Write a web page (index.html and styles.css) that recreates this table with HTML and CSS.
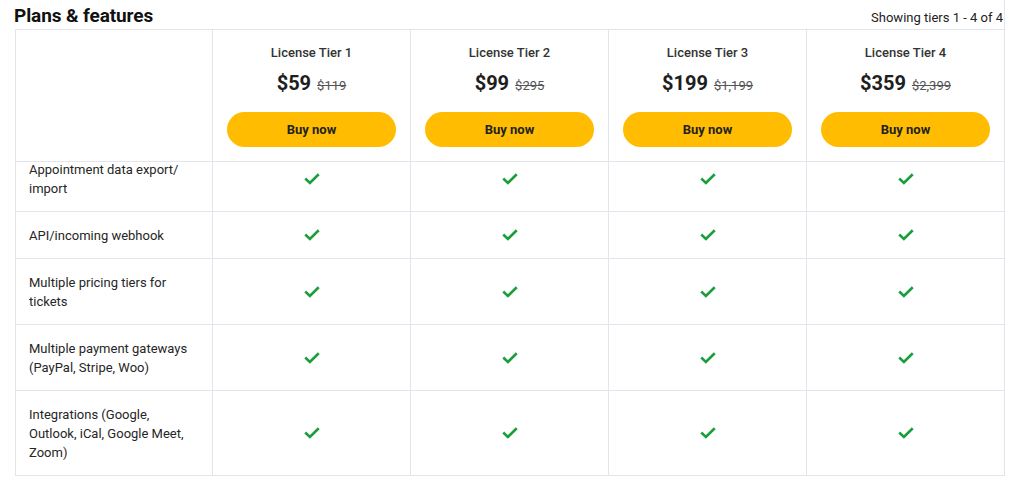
FILE: index.html
```html
<!DOCTYPE html>
<html lang="en">
<head>
<meta charset="utf-8">
<title>Plans &amp; features</title>
<link rel="stylesheet" href="styles.css">
</head>
<body>
<div class="wrap">
  <div class="topbar">
    <h2 class="title">Plans &amp; features</h2>
    <div class="showing">Showing tiers 1 - 4 of 4</div>
  </div>
  <div class="table">
    <div class="head">
      <div class="hcell empty"></div>
      <div class="hcell">
        <div class="tier">License Tier 1</div>
        <div class="price"><span class="now">$59</span><span class="old">$119</span></div>
        <button class="buy">Buy now</button>
      </div>
      <div class="hcell">
        <div class="tier">License Tier 2</div>
        <div class="price"><span class="now">$99</span><span class="old">$295</span></div>
        <button class="buy">Buy now</button>
      </div>
      <div class="hcell">
        <div class="tier">License Tier 3</div>
        <div class="price"><span class="now">$199</span><span class="old">$1,199</span></div>
        <button class="buy">Buy now</button>
      </div>
      <div class="hcell last">
        <div class="tier">License Tier 4</div>
        <div class="price"><span class="now">$359</span><span class="old">$2,399</span></div>
        <button class="buy">Buy now</button>
      </div>
    </div>
    <div class="body">
      <div class="row">
        <div class="feat">Appointment data export/ import</div>
        <div class="cell"><svg class="chk" viewBox="0 0 16 16"><path d="M2.2 8.4l3.7 3.6 7.9-7.8"/></svg></div>
        <div class="cell"><svg class="chk" viewBox="0 0 16 16"><path d="M2.2 8.4l3.7 3.6 7.9-7.8"/></svg></div>
        <div class="cell"><svg class="chk" viewBox="0 0 16 16"><path d="M2.2 8.4l3.7 3.6 7.9-7.8"/></svg></div>
        <div class="cell last"><svg class="chk" viewBox="0 0 16 16"><path d="M2.2 8.4l3.7 3.6 7.9-7.8"/></svg></div>
      </div>
      <div class="row">
        <div class="feat">API/incoming webhook</div>
        <div class="cell"><svg class="chk" viewBox="0 0 16 16"><path d="M2.2 8.4l3.7 3.6 7.9-7.8"/></svg></div>
        <div class="cell"><svg class="chk" viewBox="0 0 16 16"><path d="M2.2 8.4l3.7 3.6 7.9-7.8"/></svg></div>
        <div class="cell"><svg class="chk" viewBox="0 0 16 16"><path d="M2.2 8.4l3.7 3.6 7.9-7.8"/></svg></div>
        <div class="cell last"><svg class="chk" viewBox="0 0 16 16"><path d="M2.2 8.4l3.7 3.6 7.9-7.8"/></svg></div>
      </div>
      <div class="row">
        <div class="feat">Multiple pricing tiers for tickets</div>
        <div class="cell"><svg class="chk" viewBox="0 0 16 16"><path d="M2.2 8.4l3.7 3.6 7.9-7.8"/></svg></div>
        <div class="cell"><svg class="chk" viewBox="0 0 16 16"><path d="M2.2 8.4l3.7 3.6 7.9-7.8"/></svg></div>
        <div class="cell"><svg class="chk" viewBox="0 0 16 16"><path d="M2.2 8.4l3.7 3.6 7.9-7.8"/></svg></div>
        <div class="cell last"><svg class="chk" viewBox="0 0 16 16"><path d="M2.2 8.4l3.7 3.6 7.9-7.8"/></svg></div>
      </div>
      <div class="row">
        <div class="feat">Multiple payment gateways (PayPal, Stripe, Woo)</div>
        <div class="cell"><svg class="chk" viewBox="0 0 16 16"><path d="M2.2 8.4l3.7 3.6 7.9-7.8"/></svg></div>
        <div class="cell"><svg class="chk" viewBox="0 0 16 16"><path d="M2.2 8.4l3.7 3.6 7.9-7.8"/></svg></div>
        <div class="cell"><svg class="chk" viewBox="0 0 16 16"><path d="M2.2 8.4l3.7 3.6 7.9-7.8"/></svg></div>
        <div class="cell last"><svg class="chk" viewBox="0 0 16 16"><path d="M2.2 8.4l3.7 3.6 7.9-7.8"/></svg></div>
      </div>
      <div class="row">
        <div class="feat">Integrations (Google, Outlook, iCal, Google Meet, Zoom)</div>
        <div class="cell"><svg class="chk" viewBox="0 0 16 16"><path d="M2.2 8.4l3.7 3.6 7.9-7.8"/></svg></div>
        <div class="cell"><svg class="chk" viewBox="0 0 16 16"><path d="M2.2 8.4l3.7 3.6 7.9-7.8"/></svg></div>
        <div class="cell"><svg class="chk" viewBox="0 0 16 16"><path d="M2.2 8.4l3.7 3.6 7.9-7.8"/></svg></div>
        <div class="cell last"><svg class="chk" viewBox="0 0 16 16"><path d="M2.2 8.4l3.7 3.6 7.9-7.8"/></svg></div>
      </div>
    </div>
  </div>
</div>
</body>
</html>
```
FILE: styles.css
```css
* { box-sizing: border-box; }
html, body { margin: 0; padding: 0; background: #fff; }
body {
  font-family: Roboto, "Liberation Sans", Arial, sans-serif;
  color: #2b2b2b;
  width: 1024px;
  height: 492px;
  overflow: hidden;
}
.wrap {
  width: 1005px;
  padding-left: 15px;
  border-right: 1px solid #e4e4ec;
}
.topbar {
  height: 29px;
  display: flex;
  align-items: flex-end;
  justify-content: space-between;
  padding-bottom: 2px;
}
.title {
  margin: 0 0 0 -1px;
  font-size: 19px;
  font-weight: 700;
  color: #111;
  line-height: 22px;
  letter-spacing: -0.1px;
}
.showing {
  font-size: 13px;
  color: #222;
  line-height: 18px;
  margin-right: 1px;
}
.table {
  border-left: 1px solid #e4e4ec;
  border-top: 1px solid #e4e4ec;
}
.head, .row {
  display: grid;
  grid-template-columns: 197px repeat(3, 198px) 1fr;
}
.head {
  position: relative;
  z-index: 2;
  background: #fff;
  margin-bottom: -16px;
}
.hcell {
  border-right: 1px solid #e4e4ec;
  border-bottom: 1px solid #e4e4ec;
  background: #fff;
  padding: 14px 14px 13px;
  display: flex;
  flex-direction: column;
  align-items: center;
  height: 132px;
}
.hcell.last, .cell.last { border-right: none; }
.tier {
  font-size: 13px;
  font-weight: 500;
  color: #333;
  line-height: 18px;
}
.price {
  margin-top: 7px;
  height: 28px;
  display: flex;
  align-items: baseline;
  gap: 6px;
}
.now {
  font-size: 20px;
  line-height: 28px;
  font-weight: 700;
  color: #1e1e1e;
}
.old {
  font-size: 13px;
  line-height: 16px;
  color: #555;
  text-decoration: line-through;
}
.buy {
  margin-top: 15px;
  width: 100%;
  height: 35px;
  flex: none;
  border: none;
  border-radius: 18px;
  background: #ffbc00;
  color: #222;
  font-family: Roboto, "Liberation Sans", Arial, sans-serif;
  font-size: 13px;
  font-weight: 700;
  cursor: pointer;
}
.feat, .cell {
  border-right: 1px solid #e4e4ec;
  border-bottom: 1px solid #e4e4ec;
  padding: 14px 14px 13px 13px;
  font-size: 13px;
  line-height: 19px;
  color: #262626;
}
.cell {
  display: flex;
  align-items: center;
  justify-content: center;
  padding: 0;
}
.chk {
  width: 16px;
  height: 16px;
  fill: none;
  stroke: #1a9e3c;
  stroke-width: 2.6;
  stroke-linecap: square;
}
```
